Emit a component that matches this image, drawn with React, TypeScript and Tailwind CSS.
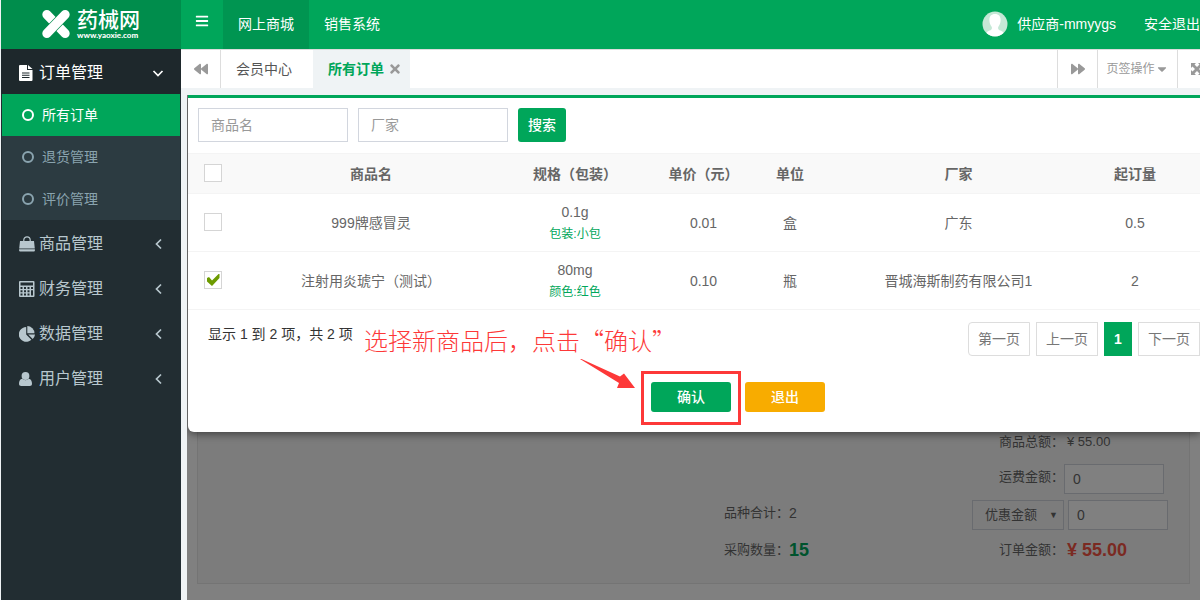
import type { ReactNode } from 'react';
import { FaBars, FaTimes, FaBackward, FaForward, FaCaretDown } from 'react-icons/fa';

const subItems = [
  { name: '所有订单', active: true },
  { name: '退货管理', active: false },
  { name: '评价管理', active: false },
];

const columns = ['商品名', '规格（包装）', '单价（元）', '单位', '厂家', '起订量'];

const products = [
  { id: 1, name: '999牌感冒灵', spec: '0.1g', pack: '包装:小包', price: '0.01', unit: '盒', maker: '广东', min: '0.5', checked: false },
  { id: 2, name: '注射用炎琥宁（测试）', spec: '80mg', pack: '颜色:红色', price: '0.10', unit: '瓶', maker: '晋城海斯制药有限公司1', min: '2', checked: true },
];

function FileIcon() {
  return (
    <svg viewBox="0 0 16 16" className="size-4" fill="currentColor" aria-hidden="true">
      <path fillRule="evenodd" d="M1 1q0-1 1-1h7v5h5.500v10q0 1-1 1H2q-1 0-1-1zM4 7.500v1h7.500v-1zm0 2.200v1h7.500v-1zm0 2.300v1h7.500v-1z" />
      <path d="M10 0l4.500 4H10z" />
    </svg>
  );
}

function BagIcon() {
  return (
    <svg viewBox="0 0 16 16" className="size-4" aria-hidden="true">
      <path fill="currentColor" d="M1 5h14l.8 7.500H.2zM.1 13.200h15.800v1.300q0 1-1 1H1.100q-1 0-1-1z" />
      <path fill="none" stroke="currentColor" strokeWidth="1.200" d="M4.800 7V4a3.200 3.200 0 0 1 6.400 0v3" />
    </svg>
  );
}

function CalcIcon() {
  return (
    <svg viewBox="0 0 16 16" className="size-4" aria-hidden="true">
      <path fill="currentColor" fillRule="evenodd" d="M0 1q0-1 1-1h13.500q1 0 1 1v14q0 1-1 1H1q-1 0-1-1zM1.500 1.500v3h12.500v-3zM1.500 6v2h2V6zm3.500 0v2h2V6zm3.500 0v2h2V6zM12 6v2h2V6zM1.500 9.300v2h2v-2zm3.500 0v2h2v-2zm3.500 0v2h2v-2zM1.500 12.500v2h2v-2zm3.500 0v2h2v-2zm3.500 0v2h2v-2zM12 9.300v5.200h2V9.300z" />
    </svg>
  );
}

function PieIcon() {
  return (
    <svg viewBox="0 0 16 16" className="size-4" fill="currentColor" aria-hidden="true">
      <path d="M7.200 1V8.500l5.200 5.200A7.400 7.400 0 1 1 7.200 1z" />
      <path d="M8.300 0A7.400 7.400 0 0 1 15.500 7.200H8.300z" />
      <path d="M9.200 8.500H16a7.400 7.400 0 0 1-2.300 4.600z" />
    </svg>
  );
}

function UserIcon() {
  return (
    <svg viewBox="0 0 14 16" className="h-4 w-3.5" fill="currentColor" aria-hidden="true">
      <circle cx="6.500" cy="5" r="3.900" />
      <path d="M3.200 7.800a4.600 4.600 0 0 0 6.600 0c2.300.2 3.200 2.600 3.200 5 0 1.500-.9 2.200-2.200 2.200H2.200C.9 15 0 14.300 0 12.800c0-2.400.9-4.800 3.200-5z" />
    </svg>
  );
}

function Chevron({ d }: { d: string }) {
  return (
    <svg viewBox="0 0 12 12" className="size-3" fill="none" stroke="currentColor" strokeWidth="1.700" aria-hidden="true">
      <path d={d} />
    </svg>
  );
}

const menus: { name: string; icon: ReactNode }[] = [
  { name: '商品管理', icon: <BagIcon /> },
  { name: '财务管理', icon: <CalcIcon /> },
  { name: '数据管理', icon: <PieIcon /> },
  { name: '用户管理', icon: <UserIcon /> },
];

function Logo() {
  return (
    <a href="#" className="flex h-[49px] items-center gap-[7px] bg-[#008d4c] pb-0.5 pl-[41px] text-white">
      <svg viewBox="0 0 28 30" className="h-[30px] w-7 shrink-0" fill="none" strokeLinecap="round" aria-hidden="true">
        <path d="M4.800 5.500L23.200 24.500" stroke="#fff" strokeWidth="9" />
        <path d="M18.500 10.300L9.500 19.700" stroke="#008d4c" strokeWidth="10.500" strokeLinecap="butt" />
        <path d="M23.200 5.500L4.800 24.500" stroke="#fff" strokeWidth="9" />
      </svg>
      <span className="flex flex-col pt-px">
        <span className="text-[21px] font-medium leading-[21px]">药械网</span>
        <span className="font-[Lato] text-[8px] font-black leading-[10px]">www.yaoxie.com</span>
      </span>
    </a>
  );
}

function Sidebar() {
  return (
    <aside className="w-[180px] shrink-0 bg-[#222d32] text-base text-[#b8c7ce]">
      <Logo />
      <nav>
        <a href="#" className="flex h-[45px] items-center bg-[#1e282c] px-[17px] pt-0.5 text-white">
          <FileIcon />
          <span className="ml-[5px] flex-1">订单管理</span>
          <Chevron d="M1.500 4L6 8.500 10.500 4" />
        </a>
        <ul className="mx-px bg-[#2c3b41] text-sm">
          {subItems.map(item => (
            <li key={item.name}>
              <a href="#" className={`flex h-[42px] items-center gap-2 pl-5 ${item.active ? 'bg-[#00a65a] text-white' : 'text-[#8aa4af]'}`}>
                <svg viewBox="0 0 12 12" className="size-3" fill="none" stroke="currentColor" strokeWidth="2" aria-hidden="true">
                  <circle cx="6" cy="6" r="5" />
                </svg>
                {item.name}
              </a>
            </li>
          ))}
        </ul>
        {menus.map(menu => (
          <a key={menu.name} href="#" className="flex h-[45px] items-center pl-[18px] pr-4 pt-0.5">
            <span className="w-5">{menu.icon}</span>
            <span className="flex-1">{menu.name}</span>
            <Chevron d="M8 1.500L3.500 6 8 10.500" />
          </a>
        ))}
      </nav>
    </aside>
  );
}

function TopBar() {
  return (
    <header className="flex h-[49px] bg-[#00a65a] text-sm text-white">
      <button type="button" aria-label="菜单" className="w-[42px] pb-2 pl-[14px]"><FaBars className="size-3.5" /></button>
      <a href="#" className="flex items-center bg-[#009551] px-[15px] pb-0.5">网上商城</a>
      <a href="#" className="flex items-center px-[15px] pb-0.5">销售系统</a>
      <div className="ml-auto flex items-center pb-0.5">
        <svg viewBox="0 0 26 26" className="mr-[9px] size-[26px]" aria-hidden="true">
          <circle cx="13" cy="13" r="12.500" fill="#c5e8d6" />
          <path fill="#fff" d="M13 3c4 0 5.800 2.500 5.600 6.500-.1 3-1.300 5-2.400 6.500-.4 2 .3 2.800 2.300 3.600 1.500.6 2.500 1.400 3 2.300A12.500 12.500 0 0 1 4.500 21.900c.5-.9 1.500-1.700 3-2.300 2-.8 2.700-1.600 2.300-3.600-1.100-1.500-2.300-3.500-2.400-6.500C7.200 5.500 9 3 13 3z" />
        </svg>
        <a href="#" className="mr-7">供应商-mmyygs</a>
        <a href="#">安全退出</a>
      </div>
    </header>
  );
}

function TabBar() {
  return (
    <div className="flex h-[39px] overflow-hidden border-t border-[#ddd] bg-white text-sm text-[#555]">
      <button type="button" aria-label="向左" className="flex w-10 items-center justify-center border-r border-[#ddd] text-[#999]"><FaBackward className="size-3.5" /></button>
      <a href="#" className="flex items-center pl-[15px] pr-[21px]">会员中心</a>
      <a href="#" className="flex items-center gap-1 bg-[#eff3f5] pl-[15px] pr-2 font-bold text-[#00a65a]">
        所有订单
        <FaTimes className="size-3.5 text-[#999]" />
      </a>
      <div className="ml-auto flex text-[#999]">
        <button type="button" aria-label="向右" className="flex w-10 items-center justify-center border-l border-[#ddd]"><FaForward className="size-3.5" /></button>
        <button type="button" className="flex w-20 items-center justify-center border-l border-[#ddd] text-xs">页签操作<FaCaretDown className="size-3.5" /></button>
        <button type="button" aria-label="全屏" className="w-[23px] overflow-hidden border-l border-[#ddd] pl-[13px]">
          <svg viewBox="0 0 12 12" className="size-3" fill="currentColor" aria-hidden="true">
            <path d="M0 0h5L3.500 1.500 6 4l2.500-2.500L7 0h5v5l-1.500-1.500L8 6l2.500 2.500L12 7v5H7l1.500-1.500L6 8l-2.500 2.500L5 12H0V7l1.500 1.500L4 6 1.500 3.500 0 5z" />
          </svg>
        </button>
      </div>
    </div>
  );
}

function CheckBox({ label, checked }: { label: string; checked?: boolean }) {
  return (
    <span className="relative mx-auto mb-0.5 block size-[18px]">
      <input type="checkbox" aria-label={label} defaultChecked={checked} className="peer block size-[18px] appearance-none border border-[#d5d5d5] bg-white" />
      <svg viewBox="0 0 18 18" className="pointer-events-none absolute inset-0 hidden peer-checked:block" fill="#6d9b00" aria-hidden="true">
        <path d="M3 7l2-1 3 3.500L14.500 3H15.500v4L8 15 3 10.500z" />
      </svg>
    </span>
  );
}

function ProductTable() {
  return (
    <table className="w-full table-fixed border-collapse text-center text-sm text-[#666]">
      <colgroup>
        <col className="w-[50px]" />
        <col />
        <col className="w-[142px]" />
        <col className="w-[115px]" />
        <col className="w-[58px]" />
        <col className="w-[279px]" />
        <col className="w-[74px]" />
        <col className="w-7" />
      </colgroup>
      <thead>
        <tr className="h-10 border-y border-[#f4f4f4] bg-[#f9f9f9]">
          <th><CheckBox label="全选" /></th>
          {columns.map(col => <th key={col} className="font-bold">{col}</th>)}
          <th />
        </tr>
      </thead>
      <tbody>
        {products.map(p => (
          <tr key={p.id} className="h-[58px] border-b border-[#f4f4f4]">
            <td><CheckBox label={p.name} checked={p.checked} /></td>
            <td>{p.name}</td>
            <td>
              <div className="leading-[22px]">{p.spec}</div>
              <div className="text-xs leading-[22px] text-[#00a65a]">{p.pack}</div>
            </td>
            <td>{p.price}</td>
            <td>{p.unit}</td>
            <td>{p.maker}</td>
            <td>{p.min}</td>
            <td />
          </tr>
        ))}
      </tbody>
    </table>
  );
}

function ProductDialog() {
  const pageBtn = 'h-[34px] border border-[#ddd] bg-white px-[9px] text-[#777]';
  return (
    <section role="dialog" aria-label="选择商品" className="relative z-10 ml-px rounded-bl-md border-t-[3px] border-[#00a65a] bg-white pb-5 text-sm shadow-[0_2px_8px_rgba(0,0,0,0.5)]">
      <form className="flex gap-2.5 px-2.5 pb-[11px] pt-2.5">
        <input type="text" aria-label="商品名" placeholder="商品名" className="h-[34px] w-[150px] border border-[#d2d6de] px-3 placeholder:text-[#999]" />
        <input type="text" aria-label="厂家" placeholder="厂家" className="h-[34px] w-[150px] border border-[#d2d6de] px-3 placeholder:text-[#999]" />
        <button type="button" className="h-[34px] rounded-[3px] bg-[#00a65a] px-2.5 font-medium text-white">搜索</button>
      </form>
      <ProductTable />
      <div className="relative flex justify-between pl-5 pt-3">
        <p className="leading-6 text-[#333]">显示 1 到 2 项，共 2 项</p>
        <div className="flex gap-1.5">
          <button type="button" className={`${pageBtn} rounded-l`}>第一页</button>
          <button type="button" className={pageBtn}>上一页</button>
          <button type="button" className="h-[34px] w-7 bg-[#00a65a] font-bold text-white">1</button>
          <button type="button" className={pageBtn}>下一页</button>
        </div>
        <p className="absolute left-[176px] top-3.5 whitespace-nowrap font-['Noto_Sans_CJK_SC',sans-serif] text-2xl font-light leading-8 text-[#fd3838]">选择新商品后，点击“确认”</p>
      </div>
      <div className="mt-[26px] flex justify-center gap-3.5 pl-[88px] text-white">
        <div className="relative">
          <button type="button" className="h-[30px] w-20 rounded-[3px] bg-[#00a65a] font-medium">确认</button>
          <span className="pointer-events-none absolute -bottom-[13px] -left-2.5 -right-2.5 -top-[11px] border-[3px] border-[#fd3838]" />
          <svg viewBox="0 0 56 30" className="pointer-events-none absolute -left-[71px] -top-6 h-[30px] w-14" fill="#fd3838" aria-hidden="true">
            <path d="M0 1L1.500 1 40 18.500 44 15.500 55 30H37L39 25z" />
          </svg>
        </div>
        <button type="button" className="h-[30px] w-20 rounded-[3px] bg-[#f8ac00] font-medium">退出</button>
      </div>
    </section>
  );
}

function OrderSummary() {
  return (
    <section className="mx-2.5 flex justify-end border border-t-0 border-[#747474] bg-[#7c7c7c] pb-[19px] text-[13px] text-[#333]">
      <div className="flex w-[248px] flex-col justify-end">
        <p className="flex h-[30px] items-center">品种合计：<span className="text-sm">2</span></p>
        <p className="mt-2 flex h-7 items-center">采购数量：<b className="text-lg text-[#00532d]">15</b></p>
      </div>
      <div className="w-[217px]">
        <p className="flex h-5 items-center"><span className="w-[92px] text-right">商品总额：</span><span className="pl-[3px]">¥ 55.00</span></p>
        <div className="mt-3 flex items-center">
          <label htmlFor="freight" className="w-[92px] pb-1 text-right">运费金额：</label>
          <input id="freight" type="text" defaultValue="0" className="h-[30px] w-[100px] border border-[#696b6f] bg-[#808080] px-2 text-sm" />
        </div>
        <div className="mt-1.5 flex items-center gap-1">
          <div className="relative">
            <select aria-label="优惠方式" className="h-[30px] w-[92px] appearance-none border border-[#696b6f] bg-[#7c7c7c] pl-3">
              <option>优惠金额</option>
            </select>
            <span className="pointer-events-none absolute right-[6px] top-[9px] text-[9px] leading-3">▼</span>
          </div>
          <input type="text" aria-label="优惠金额" defaultValue="0" className="h-[30px] w-[100px] border border-[#696b6f] bg-[#808080] px-2 text-sm" />
        </div>
        <p className="mt-1.5 flex h-7 items-center"><span className="w-[92px] text-right">订单金额：</span><b className="pl-[3px] text-lg text-[#7b2a22]">¥ 55.00</b></p>
      </div>
    </section>
  );
}

export default function App() {
  return (
    <div lang="zh-CN" className="flex min-h-screen overflow-hidden bg-[#eff3f5] pl-px font-['Liberation_Sans','Noto_Sans_CJK_SC',sans-serif]">
      <Sidebar />
      <div className="flex min-w-0 flex-1 flex-col">
        <TopBar />
        <TabBar />
        <main className="ml-1.5 mt-[7px] flex-1 overflow-hidden bg-[#808080]">
          <ProductDialog />
          <OrderSummary />
        </main>
      </div>
    </div>
  );
}
